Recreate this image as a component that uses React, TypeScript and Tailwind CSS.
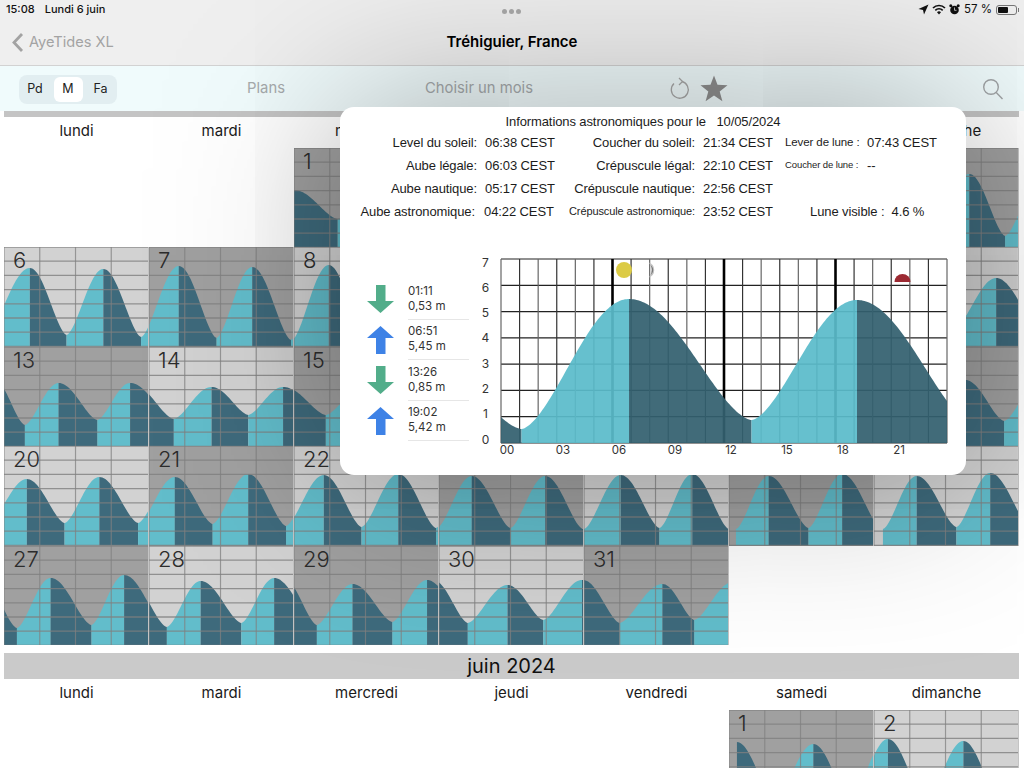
import React from 'react';

type Pt = [number, number];

interface Day {
  n: number;
  ext: Pt[];
}

// tide extremes per day, x / y inside a 145 x 99.4 cell
const MAI: (Day | null)[] = [
  null,
  null,
  { n: 1, ext: [[0, 42], [44, 71], [82, 40], [120, 72], [160, 40]] },
  { n: 2, ext: [[-10, 40], [25, 72], [64, 36], [104, 76], [140, 32]] },
  { n: 3, ext: [[-5, 32], [35, 78], [70, 30], [108, 80], [145, 28]] },
  { n: 4, ext: [[-5, 28], [40, 84], [76, 28], [112, 84], [150, 26]] },
  { n: 5, ext: [[-20, 86], [20, 26], [58, 86], [96, 26], [132, 88], [170, 28]] },
  { n: 6, ext: [[-18, 88], [26, 21], [63, 88], [100, 22], [138, 90], [175, 22]] },
  { n: 7, ext: [[-8, 90], [30, 19], [68, 91], [104, 20], [143, 93], [180, 20]] },
  { n: 8, ext: [[-2, 93], [35, 18], [72, 93], [108, 18], [146, 95], [180, 20]] },
  { n: 9, ext: [[0, 95], [38, 20], [76, 92], [112, 20], [150, 90]] },
  { n: 10, ext: [[5, 90], [42, 22], [80, 88], [116, 24], [154, 86]] },
  { n: 11, ext: [[8, 86], [46, 26], [82, 84], [120, 28], [160, 82]] },
  { n: 12, ext: [[15, 82], [50, 30], [82, 80], [123, 31], [165, 78]] },
  { n: 13, ext: [[-12, 30], [21, 78], [55, 36], [94, 73], [127, 36], [170, 72]] },
  { n: 14, ext: [[-18, 36], [25, 72], [63, 40], [100, 68], [135, 40], [178, 69]] },
  { n: 15, ext: [[-10, 40], [32, 68], [72, 38], [112, 70], [150, 36]] },
  { n: 16, ext: [[5, 36], [45, 70], [80, 34], [118, 72], [155, 33]] },
  { n: 17, ext: [[10, 33], [48, 72], [84, 33], [122, 74], [158, 33]] },
  { n: 18, ext: [[13, 33], [52, 74], [88, 33], [125, 74], [165, 33]] },
  { n: 19, ext: [[20, 33], [55, 74], [92, 33], [131, 74], [168, 33]] },
  { n: 20, ext: [[-14, 75], [23, 33], [61, 77], [96, 31], [135, 77], [171, 31]] },
  { n: 21, ext: [[-10, 77], [26, 31], [64, 78], [100, 28], [138, 80], [174, 29]] },
  { n: 22, ext: [[-8, 80], [30, 29], [68, 81], [105, 28], [143, 82], [176, 30]] },
  { n: 23, ext: [[-2, 82], [33, 30], [72, 82], [107, 30], [145, 83], [180, 30]] },
  { n: 24, ext: [[0, 83], [37, 29], [76, 82], [109, 28], [146, 83], [185, 30]] },
  { n: 25, ext: [[7, 83], [40, 30], [80, 82], [114, 28], [154, 83], [188, 30]] },
  { n: 26, ext: [[9, 83], [43, 30], [83, 81], [117, 27], [157, 80], [190, 30]] },
  { n: 27, ext: [[-24, 30], [13, 82], [47, 32], [88, 79], [121, 29], [163, 81]] },
  { n: 28, ext: [[-24, 29], [18, 81], [52, 35], [93, 77], [126, 32], [168, 79]] },
  { n: 29, ext: [[-11, 32], [23, 79], [59, 38], [99, 76], [134, 34], [174, 77]] },
  { n: 30, ext: [[-6, 34], [29, 77], [69, 39], [105, 74], [144, 34], [181, 77]] },
  { n: 31, ext: [[-1, 34], [36, 77], [79, 38], [111, 74], [150, 36]] },
];

const JUIN: (Day | null)[] = [
  null,
  null,
  null,
  null,
  null,
  { n: 1, ext: [[8, 32], [46, 92], [85, 34], [122, 92], [159, 29]] },
  { n: 2, ext: [[-23, 92], [14, 29], [52, 92], [90, 31], [127, 92], [165, 30]] },
];

// may: numbers of these days sit fully behind the popup
const COVERED = [2, 3, 4, 5, 9, 10, 11, 12, 16, 17, 18, 19, 23, 24, 25, 26];

const JOURS = ['lundi', 'mardi', 'mercredi', 'jeudi', 'vendredi', 'samedi', 'dimanche'];

const ASTRO = [
  { a: 'Level du soleil:', av: '06:38 CEST', b: 'Coucher du soleil:', bv: '21:34 CEST', c: 'Lever de lune :', cv: '07:43 CEST' },
  { a: 'Aube légale:', av: '06:03 CEST', b: 'Crépuscule légal:', bv: '22:10 CEST', c: 'Coucher de lune :', cv: '--', small: true },
  { a: 'Aube nautique:', av: '05:17 CEST', b: 'Crépuscule nautique:', bv: '22:56 CEST' },
];

const MAREES = [
  { up: false, t: '01:11', h: '0,53 m' },
  { up: true, t: '06:51', h: '5,45 m' },
  { up: false, t: '13:26', h: '0,85 m' },
  { up: true, t: '19:02', h: '5,42 m' },
];

// one closed shape per rising / falling stretch: broad crests, tight lows
function segments(ext: Pt[], left: number, right: number, bottom: number) {
  const out: { d: string; up: boolean }[] = [];
  for (let i = 0; i < ext.length - 1; i++) {
    const [x0, y0] = ext[i];
    const [x1, y1] = ext[i + 1];
    const up = y1 < y0;
    const a = Math.max(x0, left);
    const b = Math.min(x1, right);
    if (b <= a) continue;
    let d = `M${a} ${bottom}`;
    for (let x = a; ; x = Math.min(x + 1.5, b)) {
      const t = up ? (x - x0) / (x1 - x0) : (x1 - x) / (x1 - x0);
      const s = Math.pow((1 - Math.cos(Math.PI * t)) / 2, 0.8);
      const low = Math.max(y0, y1);
      const high = Math.min(y0, y1);
      const y = low - s * (low - high);
      d += `L${x.toFixed(2)} ${y.toFixed(2)}`;
      if (x >= b) break;
    }
    d += `L${b} ${bottom}Z`;
    out.push({ d, up });
  }
  return out;
}

const DayCell: React.FC<{ day: Day | null; covered?: number[] }> = ({ day, covered = [] }) => {
  if (!day) return <div />;
  const light = day.n % 2 === 0;
  return (
    <div className={`relative border-r border-[#c4c4c4] ${light ? 'bg-[#d2d2d2]' : 'bg-[#a0a0a0]'}`}>
      <svg viewBox="0 0 145 99.4" preserveAspectRatio="none" className="block w-full h-full">
        {segments(day.ext, 0, 145, 99.4).map((s, i) => (
          <path key={i} d={s.d} fill={s.up ? '#62bdcb' : '#3e6a7c'} />
        ))}
        {[0, 1, 2, 3, 4, 5, 6, 7].map(k => (
          <line key={k} x1="0" x2="145" y1={(k * 99.4) / 7} y2={(k * 99.4) / 7} stroke="#808080" strokeOpacity="0.8" strokeWidth="1.3" />
        ))}
        {[0, 36, 72, 108].map(x => (
          <line key={x} x1={x} x2={x} y1="0" y2="99.4" stroke="#808080" strokeOpacity="0.75" strokeWidth="1.2" />
        ))}
      </svg>
      {!covered.includes(day.n) && (
        <span className="absolute left-[9px] top-[-2px] text-[22px] font-light leading-[30px] text-[#2c2c2c]">{day.n}</span>
      )}
    </div>
  );
};

const WeekRow: React.FC<{ hide?: string[] }> = ({ hide = [] }) => (
  <div className="grid grid-cols-7 w-[1015px] ml-1 h-[31px] pb-[2px] items-center text-center text-[15px] text-[#1a1a1a]">
    {JOURS.map(j => (
      <div key={j} className={hide.includes(j) ? 'invisible' : ''}>{j}</div>
    ))}
  </div>
);

const Arrow: React.FC<{ up: boolean }> = ({ up }) => (
  <svg width="27" height="28" viewBox="0 0 27 28">
    {up ? (
      <path d="M13.5 0L27 12H18.5V28H9V12H0Z" fill="#3e82e6" />
    ) : (
      <path d="M9 0H18.5V16H27L13.5 28L0 16H9Z" fill="#52ad8a" />
    )}
  </svg>
);

// svg origin is x 470 / y 250 of the page
const AstroChart: React.FC = () => {
  const px = 31;
  const pw = 446;
  const py = 9;
  const ph = 184;
  const hour = pw / 24;
  const ext: Pt[] = [[-90, 50], [51.5, 179], [159, 49], [281.5, 170], [387, 50], [505, 176]];
  return (
    <svg width="496" height="212" viewBox="0 0 496 212" className="block">
      {Array.from({ length: 8 }, (_, i) => (
        <line key={i} x1={px} x2={px + pw} y1={py + (i * ph) / 7} y2={py + (i * ph) / 7} stroke="#222" strokeWidth="1.2" />
      ))}
      {Array.from({ length: 25 }, (_, i) => (
        <line
          key={i}
          x1={px + i * hour}
          x2={px + i * hour}
          y1={py}
          y2={py + ph}
          stroke={i % 6 === 0 && i % 24 !== 0 ? '#000' : i % 2 ? '#333' : '#666'}
          strokeWidth={i % 6 === 0 && i % 24 !== 0 ? 2.6 : 1.2}
        />
      ))}
      {segments(ext, px, px + pw, py + ph).map((s, i) => (
        <path key={i} d={s.d} fill={s.up ? '#5abbca' : '#33606f'} fillOpacity="0.93" />
      ))}
      <circle cx="154" cy="20" r="8" fill="#dccb45" />
      <path d="M179 12.5A8 8 0 0 1 179 27.500A14 14 0 0 0 179 12.500Z" fill="#c4c4c4" />
      <path d="M180.500 15A6 6 0 0 1 180.500 25A10 10 0 0 0 180.500 15Z" fill="#777" />
      <path d="M424.500 32A8 8 0 0 1 440.500 32Z" fill="#9c2a33" />
      {[7, 6, 5, 4, 3, 2, 1, 0].map((v, i) => (
        <text key={v} x="15.500" y={16.500 + i * 25.300} textAnchor="middle" fontSize="12" fill="#333">
          {v}
        </text>
      ))}
      {['00', '03', '06', '09', '12', '15', '18', '21'].map((v, i) => (
        <text key={v} x={37 + i * 56} y="204" textAnchor="middle" fontSize="11.500" fill="#333">
          {v}
        </text>
      ))}
    </svg>
  );
};

const App: React.FC = () => {
  return (
    <div className="relative w-[1024px] h-[768px] overflow-hidden bg-white font-['Inter',sans-serif]">
      {/* Status + nav */}
      <div className="h-[66px] bg-[#efefef] border-b border-[#d2d2d2]">
        <div className="relative h-[18px] flex items-center px-[6px] text-[11px] font-medium text-[#111]">
          <span>15:08</span>
          <span className="ml-[10px]">Lundi 6 juin</span>
          <div className="absolute left-[502px] top-[9px] flex gap-[2px]">
            <span className="w-[5px] h-[5px] rounded-full bg-[#a9a9a9]" />
            <span className="w-[5px] h-[5px] rounded-full bg-[#a9a9a9]" />
            <span className="w-[5px] h-[5px] rounded-full bg-[#a9a9a9]" />
          </div>
          <div className="ml-auto flex items-center pt-[1px]">
            <svg width="11" height="11" viewBox="0 0 11 11" className="mr-[3px]">
              <path d="M10.500 0.500L0.500 5L5 6L6 10.500Z" fill="#111" />
            </svg>
            <svg width="14" height="11" viewBox="0 0 14 11" fill="none" stroke="#111" strokeWidth="1.700" className="mr-[3px]">
              <path d="M1 4A8.500 8.500 0 0 1 13 4" />
              <path d="M3.300 6.300A5.200 5.200 0 0 1 10.700 6.300" />
              <path d="M7 10.500L5 8.300A2.800 2.800 0 0 1 9 8.300Z" fill="#111" stroke="none" />
            </svg>
            <svg width="11" height="11" viewBox="0 0 11 11" className="mr-[4px]">
              <circle cx="5.500" cy="6" r="4.300" fill="#111" />
              <circle cx="1.800" cy="1.800" r="1.500" fill="#111" />
              <circle cx="9.200" cy="1.800" r="1.500" fill="#111" />
              <path d="M5.500 3.500V6.300H7.500" stroke="#ddd" strokeWidth="0.800" fill="none" />
            </svg>
            <span className="text-[11.5px] font-normal mr-[4px]">57 %</span>
            <div className="w-[21px] h-[10px] rounded-[3px] border border-[#777] p-[1px]">
              <div className="w-[57%] h-full rounded-[1px] bg-[#111]" />
            </div>
            <span className="w-[1px] h-[4px] ml-[1px] mr-[-1px] bg-[#777]" />
          </div>
        </div>
        <div className="relative h-[47px] pt-[1px] flex items-center justify-center">
          <div className="absolute left-[11px] top-[14px] flex items-center gap-[5px] text-[14.600px] text-[#a3a3a3]">
            <svg width="13" height="21" viewBox="0 0 13 21" fill="none" stroke="#a3a3a3" strokeWidth="2.800">
              <path d="M11 2L3 10.500L11 19" />
            </svg>
            <span>AyeTides XL</span>
          </div>
          <span className="text-[15px] font-semibold text-black">Tréhiguier, France</span>
        </div>
      </div>

      {/* Toolbar */}
      <div className="relative h-[45px] bg-[#f0fbfc] flex items-center text-[14.800px] text-[#a6aaac]">
        <div className="ml-[19px] w-[98px] h-[29px] mt-[1px] rounded-lg bg-[#e2eef1] flex items-center justify-between px-[2px] text-[12.500px] text-[#222]">
          <span className="w-[29px] text-center pr-[1px]">Pd</span>
          <span className="w-[29px] h-[25px] rounded-md bg-white flex items-center justify-center">M</span>
          <span className="w-[29px] text-center">Fa</span>
        </div>
        <span className="w-[60px] ml-[119px] text-center">Plans</span>
        <span className="w-[140px] ml-[113px] text-center">Choisir un mois</span>
        <svg width="22" height="24" viewBox="0 0 22 24" fill="none" stroke="#a8a8a8" strokeWidth="1.300" className="ml-[120px]">
          <path d="M13 4.500A8.500 8.500 0 1 1 5 6.500" />
          <path d="M10 1L13.500 4.500L10 8" />
        </svg>
        <svg width="28" height="27" viewBox="0 0 28 27" className="ml-[9px]">
          <path d="M14 0.500L17.500 9.800L27.500 10.200L19.700 16.400L22.400 26.200L14 20.600L5.600 26.200L8.300 16.400L0.500 10.200L10.500 9.800Z" fill="#8e8e8e" />
        </svg>
        <svg width="22" height="22" viewBox="0 0 22 22" fill="none" stroke="#a0a4a6" strokeWidth="1.400" className="ml-[254px]">
          <circle cx="9" cy="9" r="7.300" />
          <path d="M14.200 14.500L20.500 21" />
        </svg>
      </div>

      {/* Calendar */}
      <div className="h-[6px] w-[1015px] ml-1 bg-[#c4c4c4]" />
      <WeekRow hide={['jeudi', 'vendredi', 'samedi']} />
      <div className="grid grid-cols-7 auto-rows-[99.400px] w-[1015px] ml-1">
        {MAI.map((d, i) => (
          <DayCell key={i} day={d} covered={COVERED} />
        ))}
      </div>
      <div className="mt-[8px] h-[26px] w-[1015px] ml-1 bg-[#cacaca] flex items-center justify-center text-[20px] text-[#111]">
        juin 2024
      </div>
      <WeekRow />
      <div className="grid grid-cols-7 auto-rows-[99.400px] w-[1015px] ml-1">
        {JUIN.map((d, i) => (
          <DayCell key={i} day={d} />
        ))}
      </div>

      {/* Popup astronomie */}
      <div className="absolute left-[340px] top-[107px] w-[626px] h-[368px] rounded-[14px] bg-white shadow-[0_0_180px_rgba(0,0,0,0.35)] pt-[5px] text-[13px] text-[#1c1c1c] font-['Liberation_Sans',sans-serif] tracking-[-0.1px]">
        <div className="h-[19px] leading-[19px] text-center pr-5 whitespace-pre">Informations astronomiques pour le   10/05/2024</div>
        <div className="grid grid-cols-[137px_78px_140px_90px_82px_auto] auto-rows-[23px] items-center whitespace-nowrap">
          {ASTRO.map(r => (
            <React.Fragment key={r.a}>
              <div className="text-right">{r.a}</div>
              <div className="pl-2">{r.av}</div>
              <div className="text-right">{r.b}</div>
              <div className="pl-2">{r.bv}</div>
              <div className={r.small ? 'text-[9.500px]' : 'text-[11.500px]'}>{r.c}</div>
              <div>{r.cv}</div>
            </React.Fragment>
          ))}
          <div className="text-right pr-[2px]">Aube astronomique:</div>
          <div className="pl-[7px]">04:22 CEST</div>
          <div className="text-right text-[11px]">Crépuscule astronomique:</div>
          <div className="pl-2">23:52 CEST</div>
          <div className="col-span-2 pl-[25px]">Lune visible :&nbsp; 4.6 %</div>
        </div>
        <div className="mt-[27px] flex font-['Inter',sans-serif] tracking-normal">
          <div className="ml-[27px] mt-[29px] w-[103px]">
            {MAREES.map(m => (
              <div key={m.t} className="h-[40.500px] flex items-center">
                <Arrow up={m.up} />
                <div className="ml-[14px] w-[61px] h-full border-b border-[#e6e6e6] flex flex-col justify-center text-[11.500px] leading-[15px] text-[#333]">
                  <span>{m.t}</span>
                  <span>{m.h}</span>
                </div>
              </div>
            ))}
          </div>
          <AstroChart />
        </div>
      </div>
    </div>
  );
};

export default App;
